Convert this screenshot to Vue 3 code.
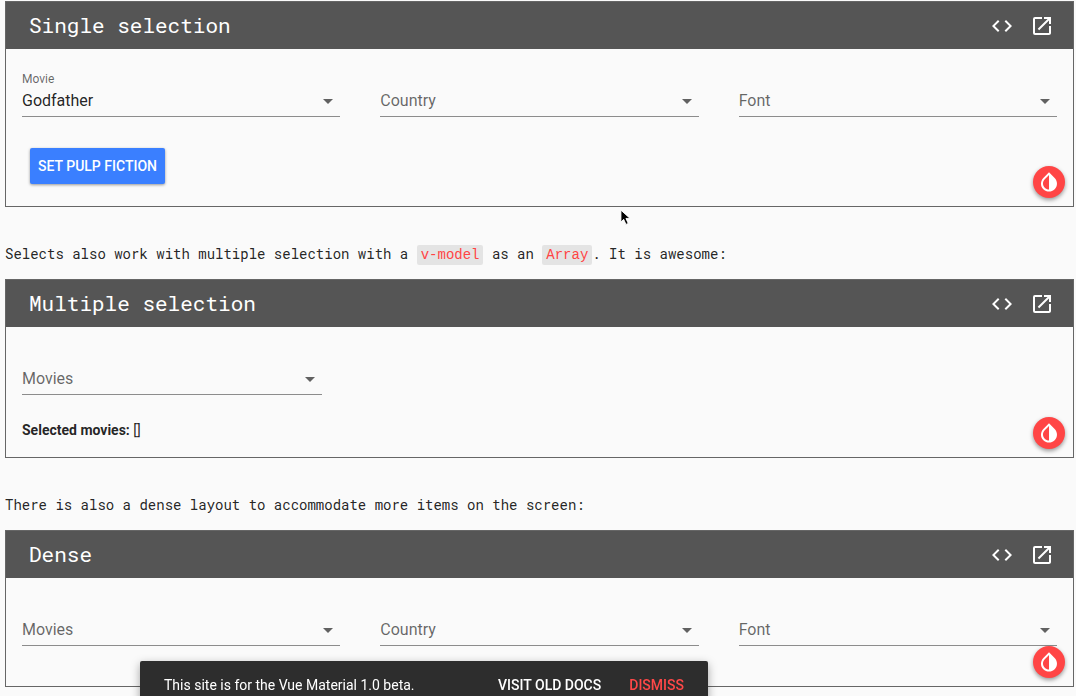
<script setup>
import { ref } from 'vue'

const selects = [
  { label: 'Country', options: ['Australia', 'Brazil', 'Japan', 'United States'] },
  { label: 'Font', options: ['Arial', 'Calibri', 'Cambria', 'Verdana'] }
]
const movieOptions = ['Fight Club', 'Godfather', 'Godfather II', 'Pulp Fiction', 'Scarface']

const cards = ref([
  {
    title: 'Single selection',
    kind: 'single',
    fields: [
      { label: 'Movie', options: movieOptions, value: 'Godfather' },
      ...selects.map((s) => ({ ...s, value: '' }))
    ]
  },
  {
    title: 'Multiple selection',
    kind: 'multiple',
    fields: [{ label: 'Movies', options: movieOptions, value: '' }]
  },
  {
    title: 'Dense',
    kind: 'dense',
    fields: [
      { label: 'Movies', options: movieOptions, value: '' },
      ...selects.map((s) => ({ ...s, value: '' }))
    ]
  }
])

const snackbar = ref(true)

function setPulpFiction() {
  cards.value[0].fields[0].value = 'Pulp Fiction'
}
</script>

<template>
  <main class="page">
    <template v-for="card in cards" :key="card.title">
      <p v-if="card.kind === 'multiple'" class="copy">
        Selects also work with multiple selection with a <code>v-model</code> as an <code>Array</code>. It is awesome:
      </p>
      <p v-if="card.kind === 'dense'" class="copy">
        There is also a dense layout to accommodate more items on the screen:
      </p>

      <section class="card">
        <header class="bar">
          <h2 class="title">{{ card.title }}</h2>
          <button type="button" class="icon-button" aria-label="Show code">
            <svg viewBox="0 0 24 24"><path d="M9.4 16.6L4.8 12l4.6-4.6L8 6l-6 6 6 6 1.4-1.4zm5.2 0l4.6-4.6-4.6-4.6L16 6l6 6-6 6-1.4-1.4z" /></svg>
          </button>
          <button type="button" class="icon-button" aria-label="Open in new window">
            <svg viewBox="0 0 24 24"><path d="M19 19H5V5h7V3H5a2 2 0 0 0-2 2v14a2 2 0 0 0 2 2h14c1.1 0 2-.9 2-2v-7h-2v7zM14 3v2h3.59l-9.83 9.83 1.41 1.41L19 6.41V10h2V3h-7z" /></svg>
          </button>
        </header>

        <div class="content" :class="card.kind">
          <div class="fields">
            <div
              v-for="(field, i) in card.fields"
              :key="field.label"
              class="field"
              :class="{ filled: field.value }"
            >
              <label :for="`${card.kind}-${i}`">{{ field.label }}</label>
              <select :id="`${card.kind}-${i}`" v-model="field.value">
                <option value="" hidden></option>
                <option v-for="o in field.options" :key="o" :value="o">{{ o }}</option>
              </select>
              <svg class="arrow" viewBox="0 0 24 24"><path d="M7 10l5 5 5-5z" /></svg>
            </div>
          </div>
          <button v-if="card.kind === 'single'" type="button" class="raised" @click="setPulpFiction">
            Set Pulp Fiction
          </button>
          <p v-if="card.kind === 'multiple'" class="selected"><strong>Selected movies:</strong> []</p>
        </div>

        <button type="button" class="fab" aria-label="Invert colors">
          <svg viewBox="0 0 24 24"><path d="M17.66 7.93L12 2.27 6.34 7.93c-3.12 3.12-3.12 8.19 0 11.31C7.9 20.8 9.95 21.58 12 21.58c2.05 0 4.1-.78 5.66-2.34 3.12-3.12 3.12-8.19 0-11.31zM12 19.59c-1.6 0-3.11-.62-4.24-1.76C6.62 16.69 6 15.19 6 13.59s.62-3.11 1.76-4.24L12 5.1v14.49z" /></svg>
        </button>
      </section>
    </template>

    <svg class="cursor" viewBox="0 0 12 18" aria-hidden="true">
      <path d="M1 1v13l3-3 2.500 5.500 2.500-1-2.500-5.500h4.500z" />
    </svg>

    <aside v-if="snackbar" class="snackbar">
      <span class="message">This site is for the Vue Material 1.0 beta.</span>
      <a href="#old-docs">Visit old docs</a>
      <button type="button" @click="snackbar = false">Dismiss</button>
    </aside>
  </main>
</template>

<style>
body {
  background: #fafafa;
}
</style>

<style scoped>
.page {
  padding: 1px 2px 0 5px;
  font-family: Roboto, "Liberation Sans", sans-serif;
  font-size: 14px;
  line-height: 20px;
  color: rgba(0, 0, 0, 0.87);
}

button,
select {
  font: inherit;
  margin: 0;
  padding: 0;
  border: 0;
  background: none;
  cursor: pointer;
}

svg {
  display: block;
  fill: currentColor;
}

.card {
  position: relative;
  border: 1px solid #666;
}

.bar {
  display: flex;
  align-items: center;
  gap: 16px;
  height: 47px;
  padding: 0 19px 0 23px;
  background: #555;
  color: #fff;
}

.title {
  flex: 1;
  margin: 0;
  font-family: "Roboto Mono", "Liberation Mono", monospace;
  font-size: 21px;
  line-height: 27px;
  font-weight: 400;
}

.icon-button,
.icon-button svg {
  width: 24px;
  height: 24px;
  color: #fff;
}

.content {
  padding: 16px;
}

.content.single {
  padding-bottom: 22px;
}

.content.multiple {
  padding-bottom: 17px;
}

.content.dense {
  padding-bottom: 40px;
}

.fields {
  display: grid;
  grid-template-columns: repeat(3, 1fr);
  gap: 40px;
}

.multiple .fields {
  grid-template-columns: 300px;
}

.field {
  display: grid;
  grid-template-rows: 20px 31px;
  border-bottom: 1px solid #8c8c8c;
}

.field label {
  grid-area: 2 / 1;
  font-size: 16px;
  line-height: 32px;
  color: rgba(0, 0, 0, 0.6);
  pointer-events: none;
}

.field.filled label {
  grid-area: 1 / 1;
  align-self: end;
  font-size: 12px;
  line-height: 12px;
}

.field select {
  grid-area: 2 / 1;
  width: 100%;
  appearance: none;
  font-size: 16px;
  line-height: 32px;
  color: rgba(0, 0, 0, 0.87);
}

.arrow {
  grid-area: 2 / 1;
  align-self: center;
  justify-self: end;
  width: 24px;
  height: 24px;
  color: #616161;
  pointer-events: none;
}

.raised {
  display: block;
  height: 36px;
  margin: 31px 8px 0;
  padding: 0 8px;
  border-radius: 2px;
  background: #3a7fff;
  color: #fff;
  font-weight: 500;
  text-transform: uppercase;
  box-shadow: 0 1px 3px rgba(0, 0, 0, 0.4);
}

.selected {
  margin: 25px 0 0;
}

.selected strong {
  font-weight: 700;
}

.fab {
  position: absolute;
  right: 8px;
  bottom: 8px;
  display: grid;
  place-items: center;
  width: 32px;
  height: 32px;
  border-radius: 50%;
  background: #ff4545;
  color: #fff;
  box-shadow: 0 2px 4px rgba(0, 0, 0, 0.4);
}

.fab svg {
  width: 24px;
  height: 24px;
}

.copy {
  margin: 36px 0 14px;
  font-family: "Roboto Mono", "Liberation Mono", monospace;
  line-height: 22px;
}

.copy code {
  padding: 2px 4px;
  border-radius: 2px;
  background: #e4e4e4;
  color: #f44;
  font-family: "Liberation Mono", monospace;
  line-height: 16px;
}

.cursor {
  position: absolute;
  left: 620px;
  top: 209px;
  width: 11px;
  height: 17px;
  fill: #000;
  stroke: #fff;
  stroke-width: 1;
}

.snackbar {
  position: fixed;
  left: 140px;
  bottom: -13px;
  display: flex;
  align-items: center;
  box-sizing: border-box;
  width: 568px;
  height: 48px;
  padding: 0 24px;
  border-radius: 2px;
  background: #2d2d2d;
  color: #fff;
  box-shadow: 0 3px 10px rgba(0, 0, 0, 0.35);
}

.message {
  flex: 1;
}

.snackbar a,
.snackbar button {
  margin-left: 28px;
  color: #fff;
  font-weight: 500;
  text-decoration: none;
  text-transform: uppercase;
}

.snackbar button {
  color: #ff4848;
}
</style>
